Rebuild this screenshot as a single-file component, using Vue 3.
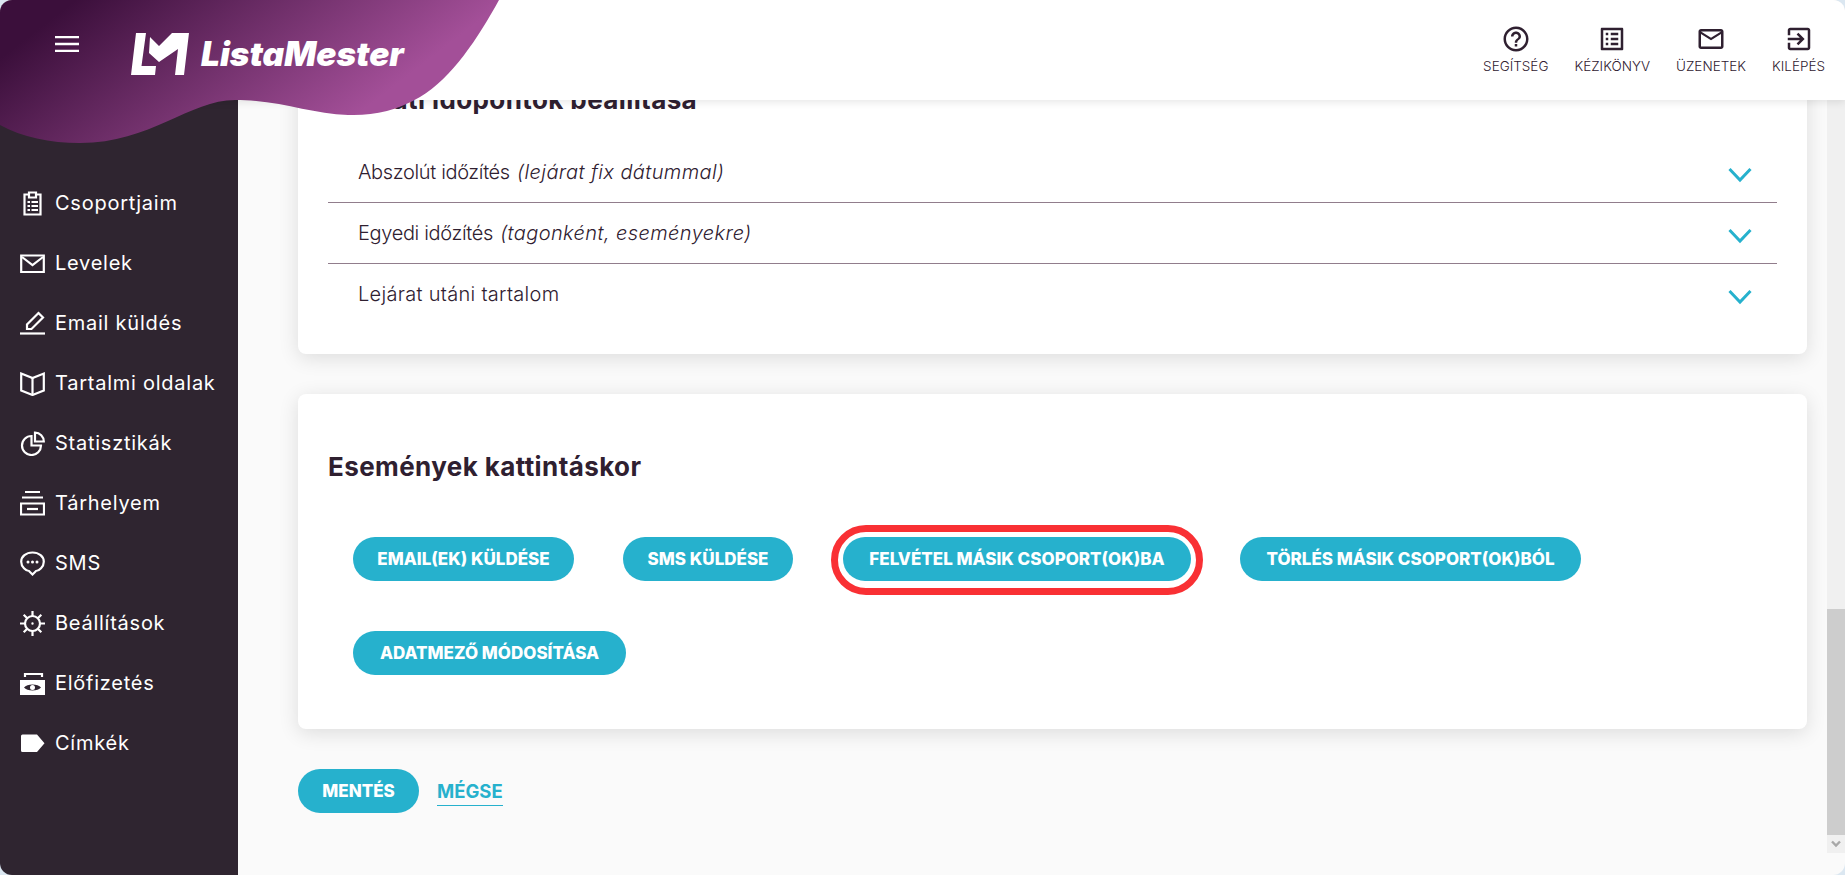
<template>
  <div class="window">
    <aside class="sidebar">
      <a v-for="item in menu" :key="item.label" class="menu-item">
        <svg class="menu-icon" viewBox="0 0 25 25">
          <path v-for="d in item.lines" :key="d" :d="d" class="line" />
          <path v-for="d in item.solid" :key="d" :d="d" class="solid" />
        </svg>
        <span>{{ item.label }}</span>
      </a>
    </aside>

    <main class="main">
      <div class="content">
        <section class="card first">
          <h2>Lejárati időpontok beállítása</h2>
          <div v-for="row in rows" :key="row.text" class="row" :class="{ noted: row.note }">
            <span>{{ row.text }} <em v-if="row.note">{{ row.note }}</em></span>
            <svg class="chevron" viewBox="0 0 24 16">
              <path d="M1.500 2l10.500 11L22.500 2" />
            </svg>
          </div>
        </section>

        <section class="card second">
          <h2>Események kattintáskor</h2>
          <div class="buttons">
            <button v-for="b in actions" :key="b.text" class="btn" :class="{ marked: b.marked }">
              {{ b.text }}
            </button>
          </div>
        </section>

        <div class="footer-actions">
          <button class="btn save">MENTÉS</button>
          <a class="cancel">MÉGSE</a>
        </div>
      </div>

      <div class="scrollbar">
        <div class="thumb"></div>
        <div class="arrow">
          <svg viewBox="0 0 10 8" width="10" height="8"><path d="M1 1.500l4 4 4-4" /></svg>
        </div>
      </div>
    </main>

    <header class="topbar">
      <a v-for="link in links" :key="link.label" class="top-link">
        <svg viewBox="0 0 24 24" width="30" height="30"><path :d="link.icon" /></svg>
        <span>{{ link.label }}</span>
      </a>
    </header>

    <svg class="wave" viewBox="0 0 510 150">
      <defs>
        <linearGradient id="waveFill" gradientUnits="userSpaceOnUse" x1="50" y1="20" x2="210" y2="228">
          <stop offset="0" stop-color="#3b0f3b" />
          <stop offset="1" stop-color="#a34f98" />
        </linearGradient>
      </defs>
      <path
        fill="url(#waveFill)"
        d="M0 0H499C478 38 452 78 420 97C396 111 372 116 348 115C310 114 280 100 235 100C190 100 150 143 80 143C50 143 22 137 0 125Z"
      />
    </svg>

    <div class="brand">
      <svg class="burger" viewBox="0 0 24 16" width="24" height="16">
        <path d="M0 1h24M0 8h24M0 15h24" />
      </svg>
      <svg class="mark" viewBox="131 33 58 42" width="58" height="42">
        <path d="M136 33H146L141.500 66H156L155 75H131Z" />
        <path d="M150 37L159 46L172 33H189L184 75H175L178 49L159 62L149 53Z" />
      </svg>
      <span class="logo-text">ListaMester</span>
    </div>
  </div>
</template>

<script setup>
const menu = [
  {
    label: "Csoportjaim",
    lines: ["M9 3.500H4.500V23.500H20.500V3.500H16", "M9 1.500h7V6.500H9z", "M11.500 11H18M11.500 15H18M11.500 19H18", "M7.500 11H10M7.500 15H10M7.500 19H10"],
  },
  { label: "Levelek", lines: ["M1.200 4.500H23.800V21H1.200z", "M2 6l10.500 8L23 6"] },
  { label: "Email küldés", lines: ["M0 22.500H25", "M7 18v-4.500L18.500 2l4.500 4.500L11.500 18z"] },
  { label: "Tartalmi oldalak", lines: ["M1.200 2.500L12.500 7L23.800 2.500V19.500L12.500 24L1.200 19.500Z", "M12.500 7V24"] },
  { label: "Statisztikák", lines: ["M15 1.500A9 9 0 0 1 23.800 10.500H15Z", "M11.500 5A9.500 9.500 0 1 0 21 14.500H11.500Z"] },
  { label: "Tárhelyem", lines: ["M5 1h15M2 6.500h21", "M1 12.500H24V23.500H1z", "M7 18h11"] },
  {
    label: "SMS",
    lines: ["M12.500 1.500C6 1.500 1.200 5.600 1.200 10.700S6 20 9 20l3.500 3.500L16 20c3 0 7.800-4.200 7.800-9.300S19 1.500 12.500 1.500z"],
    solid: ["M6.500 11a1.500 1.500 0 1 0 3 0a1.500 1.500 0 1 0-3 0z", "M11 11a1.500 1.500 0 1 0 3 0a1.500 1.500 0 1 0-3 0z", "M15.500 11a1.500 1.500 0 1 0 3 0a1.500 1.500 0 1 0-3 0z"],
  },
  {
    label: "Beállítások",
    lines: ["M5 12.500a7.500 7.500 0 1 0 15 0a7.500 7.500 0 1 0-15 0z", "M12.500 0v5M12.500 20v5M0 12.500h5M20 12.500h5M3.700 3.700l3.500 3.500M17.800 17.800l3.500 3.500M21.300 3.700l-3.500 3.500M7.200 17.800l-3.500 3.500"],
    solid: ["M11.300 12.500a1.200 1.200 0 1 0 2.400 0a1.200 1.200 0 1 0-2.400 0z"],
  },
  {
    label: "Előfizetés",
    lines: ["M5 6V3H22V6"],
    solid: ["M0 9H25V24H0Z M4 16.500C7 12.500 18 12.500 21 16.500C18 20.500 7 20.500 4 16.500Z M10 16.500a2.500 2.500 0 1 0 5 0a2.500 2.500 0 1 0-5 0Z"],
  },
  { label: "Címkék", solid: ["M2.500 3.500H17L24.500 12.300L17 21H2.500a1.500 1.500 0 0 1-1.500-1.500V5a1.500 1.500 0 0 1 1.500-1.500z"] },
];

const links = [
  {
    label: "SEGÍTSÉG",
    icon: "M11 18h2v-2h-2v2zm1-16C6.480 2 2 6.480 2 12s4.480 10 10 10 10-4.480 10-10S17.520 2 12 2zm0 18c-4.410 0-8-3.590-8-8s3.590-8 8-8 8 3.590 8 8-3.590 8-8 8zm0-14c-2.210 0-4 1.790-4 4h2c0-1.100.9-2 2-2s2 .9 2 2c0 2-3 1.750-3 5h2c0-2.250 3-2.500 3-5 0-2.210-1.790-4-4-4z",
  },
  {
    label: "KÉZIKÖNYV",
    icon: "M19 5v14H5V5h14m1.100-2H3.900c-.5 0-.9.4-.9.9v16.200c0 .4.4.9.9.9h16.200c.4 0 .9-.5.9-.9V3.900c0-.5-.5-.9-.9-.9zM11 7h6v2h-6V7zm0 4h6v2h-6v-2zm0 4h6v2h-6zM7 7h2v2H7zm0 4h2v2H7zm0 4h2v2H7z",
  },
  {
    label: "ÜZENETEK",
    icon: "M20 4H4c-1.100 0-1.990.9-1.990 2L2 18c0 1.100.9 2 2 2h16c1.100 0 2-.9 2-2V6c0-1.100-.9-2-2-2zm0 14H4V8l8 5 8-5v10zm-8-7L4 6h16l-8 5z",
  },
  {
    label: "KILÉPÉS",
    icon: "M10.090 15.590L11.500 17l5-5-5-5-1.410 1.410L12.670 11H3v2h9.670l-2.580 2.590zM19 3H5c-1.110 0-2 .9-2 2v4h2V5h14v14H5v-4H3v4c0 1.100.89 2 2 2h14c1.100 0 2-.9 2-2V5c0-1.100-.9-2-2-2z",
  },
];

const rows = [
  { text: "Abszolút időzítés", note: "(lejárat fix dátummal)" },
  { text: "Egyedi időzítés", note: "(tagonként, eseményekre)" },
  { text: "Lejárat utáni tartalom" },
];

const actions = [
  { text: "EMAIL(EK) KÜLDÉSE" },
  { text: "SMS KÜLDÉSE" },
  { text: "FELVÉTEL MÁSIK CSOPORT(OK)BA", marked: true },
  { text: "TÖRLÉS MÁSIK CSOPORT(OK)BÓL" },
  { text: "ADATMEZŐ MÓDOSÍTÁSA" },
];
</script>

<style>
body {
  margin: 0;
  background: #dbe7f1;
}
</style>

<style scoped>
.window {
  position: relative;
  display: flex;
  width: 1845px;
  height: 875px;
  border-radius: 12px;
  overflow: hidden;
  font-family: Inter, "Noto Sans", sans-serif;
  color: #2f2030;
}

.sidebar {
  flex: 0 0 238px;
  box-sizing: border-box;
  padding: 173px 0 0 20px;
  background: #2f2530;
}

.menu-item {
  display: flex;
  align-items: center;
  gap: 10px;
  height: 60px;
  color: #fff;
  font-size: 20px;
  letter-spacing: 0.75px;
}

.menu-icon {
  flex: none;
  width: 25px;
  height: 25px;
}

.line {
  fill: none;
  stroke: #fff;
  stroke-width: 2.2;
}

.solid {
  fill: #fff;
  fill-rule: evenodd;
}

.main {
  flex: 1;
  display: flex;
  min-width: 0;
  background: #fafafa;
}

.content {
  flex: 1;
  min-width: 0;
  padding: 60px 20px 0 60px;
}

.card {
  background: #fff;
  border-radius: 8px;
  box-shadow: 0 4px 20px rgba(0, 0, 0, 0.12);
}

.card h2 {
  margin: 0;
  font-size: 26px;
  line-height: 36px;
  font-weight: 700;
  letter-spacing: 0.4px;
}

.first {
  padding: 22px 30px 30px;
}

.first h2 {
  margin-bottom: 24px;
}

.row {
  display: flex;
  justify-content: space-between;
  align-items: center;
  height: 60px;
  padding: 0 25px 0 30px;
  border-bottom: 1px solid #917d8c;
  font-size: 20px;
  font-weight: 300;
  letter-spacing: 0.3px;
}

.row:last-child {
  border-bottom: 0;
}

.noted {
  letter-spacing: -0.35px;
}

.noted em {
  margin-left: 2px;
  letter-spacing: 0.4px;
}

.chevron {
  width: 24px;
  height: 16px;
  margin-top: 6px;
  fill: none;
  stroke: #26b1cd;
  stroke-width: 3;
}

.second {
  margin-top: 40px;
  padding: 55px 30px 54px;
}

.buttons {
  display: flex;
  flex-wrap: wrap;
  gap: 50px 49px;
  margin-top: 52px;
  padding-left: 25px;
}

.btn {
  position: relative;
  box-sizing: border-box;
  height: 44px;
  padding: 0;
  border: 0;
  border-radius: 22px;
  background: #26b1cd;
  color: #fff;
  font-family: inherit;
  font-size: 17px;
  font-weight: 800;
}

.buttons .btn:nth-child(1) {
  width: 221px;
}

.buttons .btn:nth-child(2) {
  width: 170px;
}

.buttons .btn:nth-child(3) {
  width: 348px;
  margin-left: 1px;
}

.buttons .btn:nth-child(4) {
  width: 341px;
}

.buttons .btn:nth-child(5) {
  width: 273px;
}

.save {
  width: 121px;
}

.marked::after {
  content: "";
  position: absolute;
  top: -12px;
  left: -12px;
  right: -12px;
  bottom: -14px;
  border: 7px solid #f93034;
  border-radius: 40px;
}

.footer-actions {
  display: flex;
  align-items: center;
  gap: 18px;
  margin-top: 40px;
}

.cancel {
  padding: 0 0 2px;
  margin-top: 3px;
  border-bottom: 1px solid #26b1cd;
  color: #26b1cd;
  font-size: 18.500px;
  line-height: 24px;
  font-weight: 700;
}

.scrollbar {
  flex: 0 0 18px;
  display: flex;
  flex-direction: column;
  justify-content: flex-end;
  height: 853px;
  background: #f0f0f0;
}

.thumb {
  height: 226px;
  background: #cdcdcd;
}

.arrow {
  display: flex;
  align-items: center;
  justify-content: center;
  height: 18px;
}

.arrow path {
  fill: none;
  stroke: #a8a8a8;
  stroke-width: 2.400;
}

.topbar {
  position: absolute;
  top: 0;
  left: 0;
  right: 0;
  display: flex;
  justify-content: flex-end;
  gap: 26px;
  box-sizing: border-box;
  height: 100px;
  padding: 24px 20px 0 0;
  background: #fff;
  box-shadow: 0 2px 8px rgba(0, 0, 0, 0.1);
}

.top-link {
  display: flex;
  flex-direction: column;
  align-items: center;
  gap: 2px;
  font-size: 13.500px;
  font-weight: 300;
  line-height: 20px;
  color: #2f2030;
}

.top-link path {
  fill: #2f2030;
}

.wave {
  position: absolute;
  top: 0;
  left: 0;
  width: 510px;
  height: 150px;
}

.brand {
  position: absolute;
  top: 33px;
  left: 55px;
  display: flex;
  align-items: flex-start;
}

.burger {
  margin: 3px 52px 0 0;
}

.burger path {
  stroke: #fff;
  stroke-width: 2.400;
}

.mark path {
  fill: #fff;
}

.logo-text {
  margin-left: 12px;
  margin-top: 1px;
  color: #fff;
  font-size: 33.500px;
  line-height: 40px;
  font-weight: 900;
  font-style: italic;
}
</style>
